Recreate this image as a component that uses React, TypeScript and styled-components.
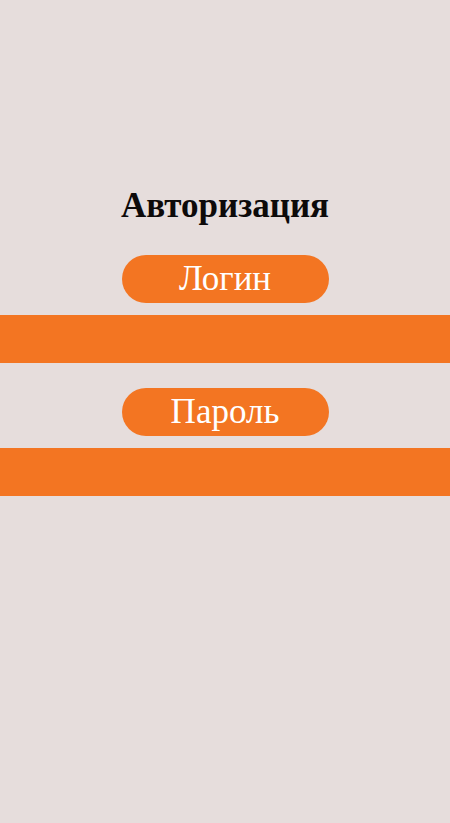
import React from "react";
import styled, { createGlobalStyle } from "styled-components";

const Global = createGlobalStyle`
  html, body { margin: 0; padding: 0; background: #e6dddc; }
  body { font-family: "Liberation Serif", "DejaVu Serif", serif; }
`;

const Page = styled.main`
  min-height: 823px;
  display: flex;
  flex-direction: column;
  align-items: center;
  padding-top: 187px;
  box-sizing: border-box;
`;

const Title = styled.h1`
  margin: 0 0 30px;
  font-size: 35px;
  line-height: 38px;
  font-weight: 700;
  color: #0d0a0a;
`;

const Field = styled.div`
  width: 100%;
  display: flex;
  flex-direction: column;
  align-items: center;
  gap: 12px;
  margin-bottom: 25px;
`;

const Label = styled.label`
  width: 207px;
  height: 48px;
  border-radius: 24px;
  background: #f37522;
  color: #ffffff;
  font-size: 35px;
  display: flex;
  align-items: center;
  justify-content: center;
`;

const Input = styled.input`
  width: 100%;
  height: 48px;
  border: none;
  outline: none;
  background: #f37522;
  color: #ffffff;
  font-family: inherit;
  font-size: 24px;
  padding: 0 16px;
  box-sizing: border-box;
`;

export default function App() {
  return (
    <>
      <Global />
      <Page>
        <Title>Авторизация</Title>
        <Field>
          <Label htmlFor="login">Логин</Label>
          <Input id="login" type="text" />
        </Field>
        <Field>
          <Label htmlFor="password">Пароль</Label>
          <Input id="password" type="password" />
        </Field>
      </Page>
    </>
  );
}
